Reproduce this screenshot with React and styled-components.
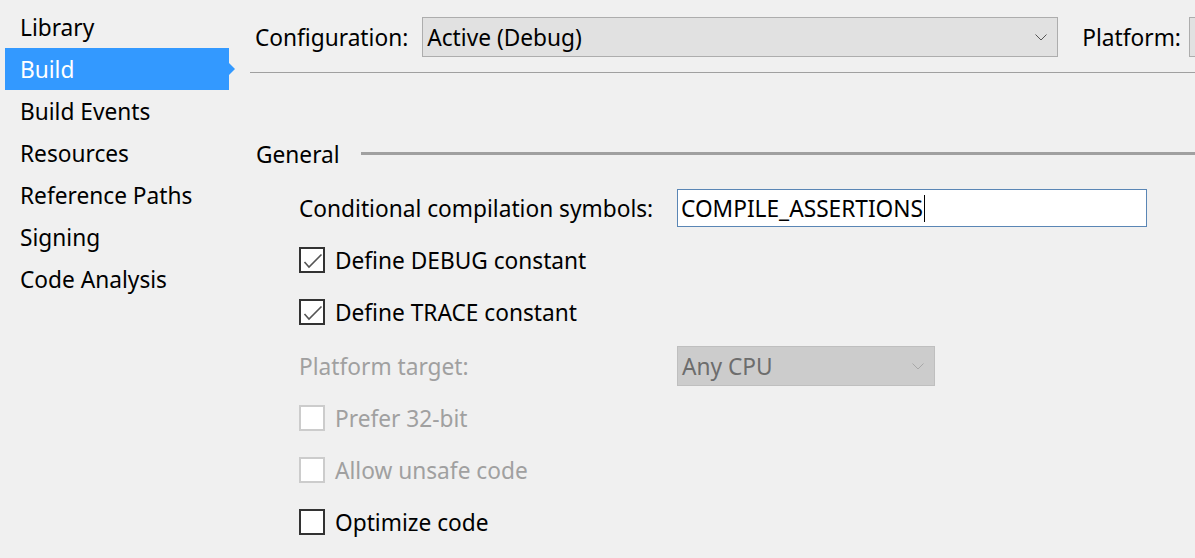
import React from "react";
import styled, { createGlobalStyle } from "styled-components";

const GlobalStyle = createGlobalStyle`
  html, body {
    margin: 0;
    padding: 0;
    background: #f0f0f0;
  }
  body {
    font-family: "Noto Sans", "Open Sans", sans-serif;
    font-size: 22.7px;
    color: #000;
  }
`;

const Page = styled.div`
  display: flex;
  width: 1195px;
  height: 558px;
  overflow: hidden;
  background: #f0f0f0;
`;

const Sidebar = styled.ul`
  list-style: none;
  margin: 0;
  padding: 6px 0 0 5px;
  width: 245px;
  flex-shrink: 0;
`;

const NavItem = styled.li`
  position: relative;
  width: 224px;
  height: 42px;
  display: flex;
  align-items: center;
  padding-left: 15px;
  box-sizing: border-box;
  background: ${(p) => (p.active ? "#3399ff" : "transparent")};
  color: ${(p) => (p.active ? "#fff" : "#000")};

  &::after {
    content: "";
    display: ${(p) => (p.active ? "block" : "none")};
    position: absolute;
    right: -6px;
    top: 15px;
    border-left: 6px solid #3399ff;
    border-top: 6px solid transparent;
    border-bottom: 6px solid transparent;
  }
`;

const Main = styled.div`
  flex: 1;
  min-width: 0;
  overflow: hidden;
`;

const Toolbar = styled.div`
  display: flex;
  align-items: center;
  padding: 2px 0 0 5px;
  box-sizing: border-box;
  height: 73px;
  border-bottom: 1px solid #a0a0a0;
  white-space: nowrap;
`;

const ToolLabel = styled.span`
  margin-right: ${(p) => p.gap || 15}px;
`;

const Combo = styled.div`
  display: flex;
  align-items: center;
  justify-content: space-between;
  flex-shrink: 0;
  width: ${(p) => p.width}px;
  height: 40px;
  box-sizing: border-box;
  padding: 0 10px 0 4px;
  background: ${(p) => (p.disabled ? "#cccccc" : "#e1e1e1")};
  border: 1px solid ${(p) => (p.disabled ? "#bfbfbf" : "#adadad")};
  color: ${(p) => (p.disabled ? "#6d6d6d" : "#000")};
  margin-right: ${(p) => p.after || 0}px;
`;

const Chevron = ({ color }) => (
  <svg width="12" height="7" viewBox="0 0 12 7">
    <polyline points="0.5,0.5 6,6 11.5,0.5" fill="none" stroke={color} strokeWidth="1" />
  </svg>
);

const SectionHead = styled.div`
  display: flex;
  align-items: center;
  height: 30px;
  margin-top: 66px;
  padding-left: 6px;
`;

const SectionRule = styled.div`
  flex: 1;
  height: 3px;
  background: #a0a0a0;
  margin-left: 21px;
  margin-top: -2px;
`;

const Form = styled.div`
  display: flex;
  flex-direction: column;
  margin-top: 13px;
  padding-left: 49px;
`;

const Row = styled.div`
  display: flex;
  align-items: center;
  height: 52px;
  margin-top: ${(p) => p.shift || 0}px;
  color: ${(p) => (p.disabled ? "#a0a0a0" : "#000")};
`;

const FieldLabel = styled.span`
  width: 378px;
  flex-shrink: 0;
`;

const TextBox = styled.div`
  display: flex;
  align-items: center;
  width: 470px;
  height: 38px;
  box-sizing: border-box;
  padding-left: 3px;
  background: #fff;
  border: 1px solid #5a86b5;
`;

const Caret = styled.span`
  display: inline-block;
  width: 0;
  height: 27px;
  border-left: 1px solid #000;
  margin-left: 1px;
`;

const Box = styled.span`
  display: flex;
  align-items: center;
  justify-content: center;
  width: 26px;
  height: 26px;
  box-sizing: border-box;
  flex-shrink: 0;
  background: #fff;
  border: 2px solid ${(p) => (p.disabled ? "#cccccc" : "#333333")};
  margin-right: 10px;
`;

const Check = () => (
  <svg width="22" height="22" viewBox="0 0 22 22">
    <polyline points="3.5,13 8,18 20.5,5.5" fill="none" stroke="#555" strokeWidth="1.6" />
  </svg>
);

const CheckRow = ({ label, checked, disabled }) => (
  <Row disabled={disabled}>
    <Box disabled={disabled}>{checked && <Check />}</Box>
    <span>{label}</span>
  </Row>
);

const nav = [
  "Library",
  "Build",
  "Build Events",
  "Resources",
  "Reference Paths",
  "Signing",
  "Code Analysis",
];

export default function App() {
  return (
    <Page>
      <GlobalStyle />
      <Sidebar>
        {nav.map((n) => (
          <NavItem key={n} active={n === "Build"}>
            {n}
          </NavItem>
        ))}
      </Sidebar>
      <Main>
        <Toolbar>
          <ToolLabel gap={14}>Configuration:</ToolLabel>
          <Combo width={636} after={24}>
            <span>Active (Debug)</span>
            <Chevron color="#555" />
          </Combo>
          <ToolLabel gap={8}>Platform:</ToolLabel>
          <Combo width={200} />
        </Toolbar>
        <SectionHead>
          <span>General</span>
          <SectionRule />
        </SectionHead>
        <Form>
          <Row>
            <FieldLabel>Conditional compilation symbols:</FieldLabel>
            <TextBox>
              COMPILE_ASSERTIONS
              <Caret />
            </TextBox>
          </Row>
          <CheckRow label="Define DEBUG constant" checked />
          <CheckRow label="Define TRACE constant" checked />
          <Row disabled shift={2}>
            <FieldLabel>Platform target:</FieldLabel>
            <Combo width={258} disabled>
              <span>Any CPU</span>
              <Chevron color="#a8a8a8" />
            </Combo>
          </Row>
          <CheckRow label="Prefer 32-bit" disabled />
          <CheckRow label="Allow unsafe code" disabled />
          <CheckRow label="Optimize code" />
        </Form>
      </Main>
    </Page>
  );
}
